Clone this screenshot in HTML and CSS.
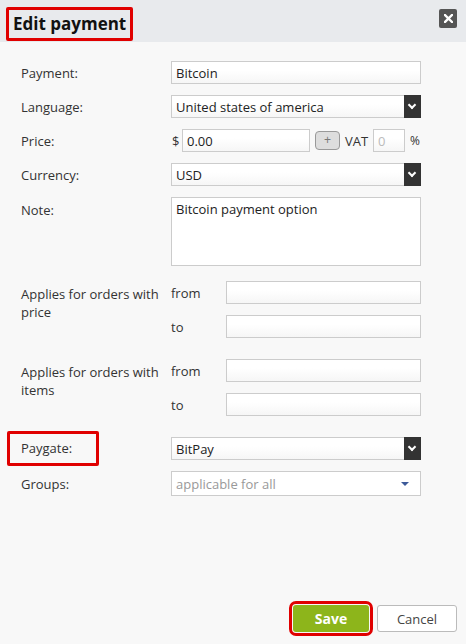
FILE: index.html
```html
<!DOCTYPE html>
<html lang="en">
<head>
  <meta charset="UTF-8" />
  <meta name="viewport" content="width=device-width, initial-scale=1.0" />
  <link rel="stylesheet" href="styles.css">
</head>
<body>
  <div class="dialog">
    <div class="dialog-head">
      <h1 class="title marked">Edit payment</h1>
      <button type="button" class="close" aria-label="Close">
        <svg width="9" height="9" viewBox="0 0 9 9"><path d="M1 1L8 8M8 1L1 8" stroke="#fff" stroke-width="2.4" stroke-linecap="square"/></svg>
      </button>
    </div>

    <form class="dialog-body" onsubmit="return false">
      <div class="row">
        <label for="payment">Payment:</label>
        <input type="text" id="payment" value="Bitcoin" />
      </div>

      <div class="row">
        <label for="language">Language:</label>
        <div class="select"><span>United states of america</span><i class="arrow"></i></div>
      </div>

      <div class="row">
        <label for="price">Price:</label>
        <div class="price">
          <span class="cur">$</span>
          <input type="text" id="price" class="price-input" value="0.00" />
          <button type="button" class="plus">+</button>
          <span class="vat">VAT</span>
          <input type="text" class="vat-input" placeholder="0" />
          <span class="pct">%</span>
        </div>
      </div>

      <div class="row">
        <label for="currency">Currency:</label>
        <div class="select"><span>USD</span><i class="arrow"></i></div>
      </div>

      <div class="row top">
        <label for="note">Note:</label>
        <textarea id="note">Bitcoin payment option</textarea>
      </div>

      <div class="row top group">
        <label>Applies for orders with price</label>
        <div class="range">
          <span>from</span><input type="text" />
          <span>to</span><input type="text" />
        </div>
      </div>

      <div class="row top group wide">
        <label>Applies for orders with items</label>
        <div class="range">
          <span>from</span><input type="text" />
          <span>to</span><input type="text" />
        </div>
      </div>

      <div class="row wide">
        <label><span class="paygate">Paygate:</span></label>
        <div class="select"><span>BitPay</span><i class="arrow"></i></div>
      </div>

      <div class="row">
        <label>Groups:</label>
        <div class="select light"><span>applicable for all</span><i class="caret"></i></div>
      </div>
    </form>

    <div class="dialog-foot">
      <button type="button" class="btn save">Save</button>
      <button type="button" class="btn cancel">Cancel</button>
    </div>
  </div>
</body>
</html>
```

FILE: styles.css
```css
html, body {
  margin: 0;
  height: 100%;
}

body {
  font-family: "Open Sans", "Liberation Sans", sans-serif;
  font-size: 13px;
  color: #333;
  background: #f8f8f8;
}

.dialog {
  height: 644px;
  display: flex;
  flex-direction: column;
}

.dialog-head {
  height: 42px;
  box-sizing: border-box;
  padding: 7px 9px 0 6px;
  background: #e8eaed;
  display: flex;
  justify-content: space-between;
  align-items: flex-start;
}

.title {
  margin: 0;
  font-size: 17px;
  font-weight: 700;
  color: #111;
  line-height: 28px;
  padding: 0 4px;
}

.marked {
  border: 3px solid #e00000;
  border-radius: 2px;
}

.close {
  margin-top: 2px;
  width: 18px;
  height: 19px;
  padding: 0;
  border: none;
  border-radius: 2px;
  background: #555;
  display: flex;
  align-items: center;
  justify-content: center;
}

.dialog-body {
  padding: 19px 0 0 21px;
  display: flex;
  flex-direction: column;
  gap: 11px;
}

.row {
  display: grid;
  grid-template-columns: 150px 250px;
  align-items: center;
}

.row.top {
  align-items: start;
}

.row.group {
  margin-top: 4px;
}

.row.wide {
  margin-top: 10px;
}

.row.top > label {
  padding-top: 4px;
  line-height: 18px;
  padding-right: 8px;
}

input[type="text"], textarea, .select {
  box-sizing: border-box;
  height: 23px;
  border: 1px solid #ccc;
  background: linear-gradient(#fff, #fff 40%, #f6f6f6);
  font-family: inherit;
  font-size: 13px;
  color: #222;
  padding: 0 4px;
  margin: 0;
}

textarea {
  height: 69px;
  resize: none;
  padding: 2px 4px;
  background: #fff;
  line-height: 18px;
}

.select {
  display: flex;
  align-items: center;
  justify-content: space-between;
  padding-right: 0;
}

.select .arrow {
  width: 17px;
  height: 23px;
  margin: -1px -1px -1px 0;
  background: #333;
  position: relative;
}

.select .arrow::after {
  content: "";
  position: absolute;
  left: 5px;
  top: 7px;
  width: 4px;
  height: 4px;
  border-right: 2px solid #fff;
  border-bottom: 2px solid #fff;
  transform: rotate(45deg);
}

.select.light {
  height: 25px;
  color: #999;
  background: #fff;
}

.select .caret {
  width: 0;
  height: 0;
  margin-right: 11px;
  border-left: 4px solid transparent;
  border-right: 4px solid transparent;
  border-top: 4px solid #3d5a99;
}

.price {
  display: flex;
  align-items: center;
}

.cur {
  margin-left: 1px;
  width: 10px;
}

.price-input {
  width: 128px;
}

.plus {
  margin: 0 5px;
  width: 25px;
  height: 19px;
  padding: 0;
  border: 1px solid #999;
  border-radius: 4px;
  background: #ddd;
  color: #777;
  font-size: 12px;
  line-height: 15px;
}

.vat {
  width: 28px;
}

.vat-input {
  width: 32px;
}

.vat-input::placeholder {
  color: #bbb;
}

.pct {
  margin-left: 5px;
  font-size: 12px;
}

.range {
  display: grid;
  grid-template-columns: 55px 195px;
  row-gap: 11px;
  align-items: center;
}

.paygate {
  display: inline-block;
  box-sizing: border-box;
  width: 92px;
  height: 35px;
  line-height: 29px;
  margin: -6px 0 -6px -14px;
  padding-left: 11px;
  border: 3px solid #e00000;
  border-radius: 2px;
  vertical-align: middle;
}

.dialog-foot {
  margin-top: auto;
  padding: 0 9px 12px 0;
  display: flex;
  justify-content: flex-end;
  gap: 8px;
}

.btn {
  height: 27px;
  border-radius: 3px;
  font-family: inherit;
  font-size: 13px;
  padding: 0;
}

.save {
  width: 76px;
  border: none;
  background: #8db51b;
  color: #fff;
  font-weight: 700;
  font-size: 14px;
  outline: 3px solid #e00000;
  outline-offset: 1px;
}

.cancel {
  width: 80px;
  border: 1px solid #bbb;
  background: #fff;
  color: #444;
}
```
